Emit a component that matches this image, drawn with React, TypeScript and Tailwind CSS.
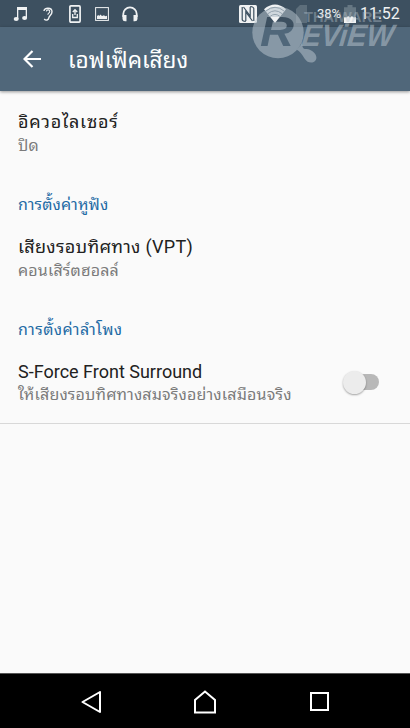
import type { ReactNode } from "react";

function StatusBar() {
  return (
    <div className="flex h-[27px] shrink-0 items-center bg-[#3d5060] pr-[9px] pl-[13px] text-[#f0f2f3]">
      <svg className="h-[16px] w-[15px] shrink-0" viewBox="0 0 15 16" fill="currentColor">
        <path d="M4 1h10v11h-1.3V4H5.3v9H4z" />
        <ellipse cx="3.2" cy="13" rx="2.5" ry="2" />
        <ellipse cx="11.6" cy="12" rx="2.5" ry="2" />
      </svg>
      <svg className="ml-[15px] h-[14px] w-[11px] shrink-0" viewBox="0 0 11 14" fill="none" stroke="currentColor" strokeWidth="1.4">
        <path d="M1 4C1 .3 9 .1 9 4.7c0 3.2-2.7 3.4-3.2 6.1C5.5 13 3 14 1.2 12" />
        <path d="M3.3 4.3c.5-2.2 3.7-1.8 3.4.4-.2 1.7-2 1.3-1.8 3.1" strokeWidth="1.1" />
      </svg>
      <svg className="ml-[15px] h-[18px] w-[12px] shrink-0" viewBox="0 0 12 18" fill="none" stroke="currentColor">
        <rect x=".9" y=".9" width="10.2" height="16.2" rx="1" strokeWidth="1.7" />
        <path d="M6 10V5M3.8 7 6 4.7 8.2 7M3.7 9v3.5h4.6V9" strokeWidth="1.3" />
      </svg>
      <svg className="ml-[14px] h-[14px] w-[14px] shrink-0" viewBox="0 0 14 14">
        <rect x=".6" y=".6" width="12.8" height="12.8" fill="none" stroke="currentColor" strokeWidth="1" />
        <path d="M2 12V9l1.3-1 1 1 1-1.5L7 9l2-.8 1.2 1 1.8-.4V12z" fill="currentColor" />
      </svg>
      <svg className="ml-[13px] h-[16px] w-[16px] shrink-0" viewBox="0 0 16 16">
        <path d="M1.3 11V8a6.7 6.7 0 0 1 13.4 0v3" fill="none" stroke="currentColor" strokeWidth="1.8" />
        <path d="M.5 9h4v6.3H3A2.5 2.5 0 0 1 .5 13zm15 0h-4v6.3H13a2.5 2.5 0 0 0 2.5-2.3z" fill="currentColor" />
      </svg>
      <svg className="ml-[101px] h-[18px] w-[18px] shrink-0" viewBox="0 0 18 18">
        <rect width="18" height="18" rx="1.5" fill="currentColor" />
        <path d="M3.2 2v12.5q0 1.6 3.6 2M6.8 16V7l6.7 9M14.8 16V3.5q0-1.6-3.6-2M11.2 2v9L4.5 2" fill="none" stroke="#3d5060" strokeWidth="1.2" />
      </svg>
      <svg className="ml-[7px] h-[19px] w-[22px] shrink-0" viewBox="0 0 22 19">
        <path d="M0 5.2Q11-4 22 5.2L11 19z" fill="currentColor" />
        <g fill="none" stroke="#5e7180" strokeWidth=".9">
          <path d="M1.7 7.2Q11-.6 20.3 7.2" />
          <path d="M4 9.6q7-5.6 14 0M6.2 12.3q4.8-3.8 9.6 0" />
        </g>
      </svg>
      <svg className="ml-[10px] h-[18px] w-[11px] shrink-0" viewBox="0 0 11 18" fill="#5d6e7b">
        <path d="M0 4 4 0h7v18H0z" />
      </svg>
      <span className="ml-[10px] w-[27px] shrink-0 text-[13px] leading-none tracking-[-0.1px]">38%</span>
      <svg className="h-[18px] w-[12px] shrink-0" viewBox="0 0 12 18">
        <path d="M3.5 0h5v2.2H12v10H0v-10h3.5z" fill="#667783" />
        <path d="M0 12.3h3l1-1.4 2 1.5 2-1.5 1.2 1.4H12V18H0z" fill="currentColor" />
      </svg>
      <span className="ml-[4px] shrink-0 text-[16px] leading-none">11:52</span>
    </div>
  );
}

function Watermark() {
  return (
    <svg className="pointer-events-none absolute top-0 left-[250px] z-20 h-[70px] w-[160px]" viewBox="250 0 160 70">
      {/* the R is cut out of the magnifier lens */}
      <mask id="lens" maskUnits="userSpaceOnUse" x="250" y="0" width="160" height="70">
        <rect x="250" width="160" height="70" fill="white" />
        <text x="260" y="46" fontSize="42" fontFamily="Liberation Sans, sans-serif" fontWeight="bold" fontStyle="italic" textLength="34" lengthAdjust="spacingAndGlyphs" fill="black">R</text>
      </mask>
      <g fill="#b5c1ca" fillOpacity=".55">
        <g mask="url(#lens)">
          <circle cx="278" cy="32.5" r="25.7" />
        </g>
        <path d="M303 39q-1.500 6-6.200 10.800 4 2.200 7.700 8.700c5 8 15 3 11-4-2-3.500-6-5.500-10.500-5.500-3-.5-3.500-5-2-10z" />
        <g fontFamily="Liberation Sans, sans-serif" fontWeight="bold">
          <text x="304" y="22" fontSize="14" textLength="78" lengthAdjust="spacingAndGlyphs" fillOpacity=".42">THAIWARE</text>
          <text x="0" y="0" fontSize="31" fontStyle="italic" textLength="92" lengthAdjust="spacingAndGlyphs" transform="translate(301 46) skewX(-6)">EViEW</text>
        </g>
      </g>
    </svg>
  );
}

function Row({ title, summary, children }: { title: ReactNode; summary: ReactNode; children?: ReactNode }) {
  return (
    <div className="flex h-[84px] items-center justify-between pr-[31px] pl-[18px]">
      <div className="pt-px whitespace-nowrap">
        <div className="h-[24px] text-[18px] leading-[24px] text-[#212121]">{title}</div>
        <div className="h-[22px] text-[16px] leading-[22px] tracking-[0.16px] text-[#7b7b7b]">{summary}</div>
      </div>
      {children}
    </div>
  );
}

export default function App() {
  return (
    <div className="relative flex h-[728px] w-[410px] flex-col overflow-hidden bg-[#fafafa] font-[Roboto,'Noto_Sans_Thai_Looped','Noto_Looped_Thai',Loma,Garuda,Waree,'Droid_Sans_Thai','Droid_Sans_Fallback',sans-serif]">
      <StatusBar />
      <header className="z-10 flex h-[64px] shrink-0 items-center bg-[#50677a] pl-[23px] text-white shadow-[0_1px_3px_rgba(0,0,0,0.4)]">
        <svg className="h-[18px] w-[18px]" viewBox="0 0 18 18" fill="none" stroke="currentColor" strokeWidth="2.2">
          <path d="M9.5 1 1.5 9l8 8M1.5 9H18" />
        </svg>
        <h1 className="ml-[27px] pt-[3px] text-[22.6px] leading-[32px] whitespace-nowrap">เอฟเฟ็คเสียง</h1>
      </header>

      <main className="grow">
        <Row title={<span className="relative -top-px tracking-[0.75px]">อิควอไลเซอร์</span>} summary="ปิด" />
        <h2 className="h-[41px] pt-[19px] pl-[18px] text-[16px] leading-[22px] tracking-[0.1px] text-[#1f6ba5]">การตั้งค่าหูฟัง</h2>
        <Row title={<span className="relative -top-px tracking-[0.3px]">เสียงรอบทิศทาง (VPT)</span>} summary="คอนเสิร์ตฮอลล์" />
        <h2 className="h-[40px] pt-[19px] pl-[18px] text-[16px] leading-[22px] tracking-[0.4px] text-[#1f6ba5]">การตั้งค่าลำโพง</h2>
        <div className="h-[84px] border-b border-[#d8d8d8]">
          <Row title="S-Force Front Surround" summary="ให้เสียงรอบทิศทางสมจริงอย่างเสมือนจริง">
            <div className="flex h-[16px] w-[35px] items-center rounded-full bg-[#b8b8b8]">
              <div className="-ml-px h-[23px] w-[23px] shrink-0 rounded-full bg-[#ececec] shadow-[0_1px_2px_rgba(0,0,0,0.35)]" />
            </div>
          </Row>
        </div>
      </main>

      <nav className="flex h-[55px] shrink-0 items-center border-t border-[#555] bg-black pt-px pl-[81px] text-white">
        <svg className="h-[22px] w-[20px]" viewBox="0 0 20 22" fill="none" stroke="currentColor" strokeWidth="2" strokeLinejoin="round">
          <path d="M19 1v20L1.500 11z" />
        </svg>
        <svg className="ml-[93px] h-[24px] w-[22px]" viewBox="0 0 22 24" fill="none" stroke="currentColor" strokeWidth="2">
          <path d="M1 22.500V10L11 1.500 21 10v12.500z" />
        </svg>
        <svg className="ml-[94px] h-[19px] w-[19px]" viewBox="0 0 19 19" fill="none" stroke="currentColor" strokeWidth="2">
          <rect x="1" y="1" width="17" height="17" />
        </svg>
      </nav>
      <Watermark />
    </div>
  );
}
